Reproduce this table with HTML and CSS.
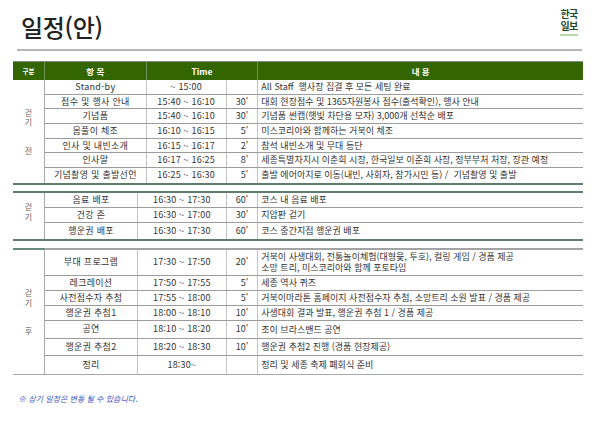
FILE: index.html
```html
<!DOCTYPE html>
<html lang="ko">
<head>
<meta charset="utf-8">
<title>일정(안)</title>
<link rel="stylesheet" href="styles.css">
</head>
<body>
<div class="page">
  <header class="top">
    <h1 class="title">일정(안)</h1>
    <div class="logo"><span class="logo-text">한국일보</span><i class="logo-bar"></i></div>
  </header>
  <div class="rule"></div>
  <div class="schedule">
    <div class="thead">
      <div class="h-cat">구분</div>
      <div>항 목</div>
      <div>Time</div>
      <div class="h-last">내 용</div>
    </div>

    <section class="sec sec1">
      <div class="cat">걷<br>기<br><br><br>전</div>
      <div class="rows">
        <div class="row"><div class="c-item">Stand-by</div><div class="c-time">~ 15:00</div><div class="c-dur"></div><div class="c-desc">All Staff &nbsp;행사장 집결 후 모든 세팅 완료</div></div>
        <div class="row"><div class="c-item">접수 및 행사 안내</div><div class="c-time">15:40 ~ 16:10</div><div class="c-dur">30'</div><div class="c-desc">대회 현장접수 및 1365자원봉사 접수(출석확인), 행사 안내</div></div>
        <div class="row"><div class="c-item">기념품</div><div class="c-time">15:40 ~ 16:10</div><div class="c-dur">30'</div><div class="c-desc">기념품 썬캡(햇빛 차단용 모자) 3,000개 선착순 배포</div></div>
        <div class="row"><div class="c-item">몸풀이 체조</div><div class="c-time">16:10 ~ 16:15</div><div class="c-dur">5'</div><div class="c-desc">미스코리아와 함께하는 거북이 체조</div></div>
        <div class="row"><div class="c-item">인사 및 내빈소개</div><div class="c-time">16:15 ~ 16:17</div><div class="c-dur">2'</div><div class="c-desc">참석 내빈소개 및 무대 등단</div></div>
        <div class="row"><div class="c-item">인사말</div><div class="c-time">16:17 ~ 16:25</div><div class="c-dur">8'</div><div class="c-desc">세종특별자치시 이춘희 시장, 한국일보 이준희 사장, 정부부처 처장, 장관 예정</div></div>
        <div class="row"><div class="c-item">기념촬영 및 출발선언</div><div class="c-time">16:25 ~ 16:30</div><div class="c-dur">5'</div><div class="c-desc">출발 에어아치로 이동(내빈, 사회자, 참가시민 등) / &nbsp;기념촬영 및 출발</div></div>
      </div>
    </section>

    <section class="sec sec2">
      <div class="cat">걷<br>기</div>
      <div class="rows">
        <div class="row"><div class="c-item">음료 배포</div><div class="c-time">16:30 ~ 17:30</div><div class="c-dur">60'</div><div class="c-desc">코스 내 음료 배포</div></div>
        <div class="row"><div class="c-item">건강 존</div><div class="c-time">16:30 ~ 17:00</div><div class="c-dur">30'</div><div class="c-desc">지압판 걷기</div></div>
        <div class="row"><div class="c-item">행운권 배포</div><div class="c-time">16:30 ~ 17:30</div><div class="c-dur">60'</div><div class="c-desc">코스 중간지점 행운권 배포</div></div>
      </div>
    </section>

    <section class="sec sec3">
      <div class="cat">걷<br>기<br><br><br>후</div>
      <div class="rows">
        <div class="row r-double"><div class="c-item">부대 프로그램</div><div class="c-time">17:30 ~ 17:50</div><div class="c-dur">20'</div><div class="c-desc">거북이 사생대회, 전통놀이체험(대형윷, 투호), 컬링 게임 / 경품 제공<br>소망 트리, 미스코리아와 함께 포토타임</div></div>
        <div class="row"><div class="c-item">레크레이션</div><div class="c-time">17:50 ~ 17:55</div><div class="c-dur">5'</div><div class="c-desc">세종 역사 퀴즈</div></div>
        <div class="row"><div class="c-item">사전접수자 추첨</div><div class="c-time">17:55 ~ 18:00</div><div class="c-dur">5'</div><div class="c-desc">거북이마라톤 홈페이지 사전접수자 추첨, 소망트리 소원 발표 / 경품 제공</div></div>
        <div class="row"><div class="c-item">행운권 추첨1</div><div class="c-time">18:00 ~ 18:10</div><div class="c-dur">10'</div><div class="c-desc">사생대회 결과 발표, 행운권 추첨 1 / 경품 제공</div></div>
        <div class="row r-tall"><div class="c-item">공연</div><div class="c-time">18:10 ~ 18:20</div><div class="c-dur">10'</div><div class="c-desc">조이 브라스밴드 공연</div></div>
        <div class="row r-tall"><div class="c-item">행운권 추첨2</div><div class="c-time">18:20 ~ 18:30</div><div class="c-dur">10'</div><div class="c-desc">행운권 추첨2 진행 (경품 현장제공)</div></div>
        <div class="row r-tall"><div class="c-item">정리</div><div class="c-time">18:30~</div><div class="c-dur"></div><div class="c-desc">정리 및 세종 축제 폐회식 준비</div></div>
      </div>
    </section>
  </div>
  <p class="note">※ 상기 일정은 변동 될 수 있습니다.</p>
</div>
</body>
</html>
```

FILE: styles.css
```css
* { box-sizing: border-box; }
html, body { margin: 0; padding: 0; background: #ffffff; }
body {
  font-family: "Noto Sans CJK KR", "Noto Sans", sans-serif;
  color: #333333;
  width: 600px;
  height: 422px;
  overflow: hidden;
}
.page { width: 600px; }

.top {
  display: flex;
  justify-content: space-between;
  align-items: flex-start;
  height: 49px;
  padding: 0 20px 0 21px;
}
.title {
  margin: 0;
  padding-top: 12px;
  font-size: 24px;
  line-height: 30px;
  font-weight: 500;
  letter-spacing: -0.3px;
  color: #222222;
}
.logo {
  display: flex;
  flex-direction: column;
  align-items: center;
  margin-top: 8px;
  width: 22px;
}
.logo-text {
  display: block;
  width: 20px;
  font-size: 10px;
  line-height: 12px;
  font-weight: 700;
  letter-spacing: -0.8px;
  text-align: center;
  color: #1f4a2c;
  word-break: break-all;
}
.logo-bar {
  display: block;
  width: 18px;
  height: 2px;
  margin-top: 2px;
  background: #b9d8a8;
}
.rule {
  height: 2px;
  margin: 0 18px 0 17px;
  background: #b4b9b4;
}

.schedule {
  width: 570px;
  margin: 10px 0 0 13px;
}
.thead {
  display: grid;
  grid-template-columns: 32px 101.7px 111.6px 1fr;
  height: 19px;
  border-top: 1px solid #8a8a8a;
  background: #336600;
  color: #ffffff;
  font-weight: 700;
  font-size: 8.5px;
  line-height: 18px;
  text-align: center;
}
.thead > div { border-right: 1px solid #6f9458; }
.thead > .h-last { border-right: none; }
.thead > .h-cat { font-size: 6.5px; }

.sec { display: flex; }
.cat {
  width: 32px;
  flex: none;
  display: flex;
  align-items: center;
  justify-content: center;
  text-align: center;
  font-size: 8px;
  line-height: 9.5px;
  color: #666666;
  border-right: 1px solid #a8a8a8;
}
.rows { flex: 1; display: flex; flex-direction: column; }
.row {
  display: grid;
  grid-template-columns: 101.7px 80px 31.6px 1fr;
  height: 14.7px;
  border-bottom: 1px solid #9c9c9c;
  font-size: 9px;
  line-height: 12px;
}
.row:last-child { border-bottom: none; }
.row > div {
  display: flex;
  align-items: center;
  border-right: 1px solid #c4c4c4;
  white-space: nowrap;
}
.row > .c-desc { border-right: none; padding-left: 3px; }
.c-item, .c-time { justify-content: center; }
.c-item { letter-spacing: 0.3px; }
.c-dur { justify-content: flex-end; padding-right: 9px; }
.c-time { letter-spacing: 0.2px; }

.sec1 { border-bottom: 2px solid #5e7d6c; }
.sec2 {
  margin-top: 6px;
  border-top: 2px solid #5e7d6c;
  border-bottom: 2px solid #5e7d6c;
}
.sec2 .row { grid-template-columns: 93px 88.7px 31.6px 1fr; height: 15.3px; }
.sec2 .cat { padding-bottom: 8px; }

.sec3 {
  margin-top: 7px;
  border-bottom: 1px solid #a8a8a8;
}
.sec3 .cat { border-top: 2px solid #6a8a78; }
.sec3 .rows { border-top: 2px solid #a3a3a3; }
.sec3 .row { grid-template-columns: 93px 88.7px 31.6px 1fr; height: 15px; }
.sec3 .row.r-double { height: 26.3px; }
.sec3 .row.r-tall { height: 17.7px; }
.sec3 .c-desc { line-height: 11.5px; }

.note {
  margin: 18px 0 0 18px;
  font-size: 8px;
  font-style: italic;
  color: #3b4fc4;
}
```
